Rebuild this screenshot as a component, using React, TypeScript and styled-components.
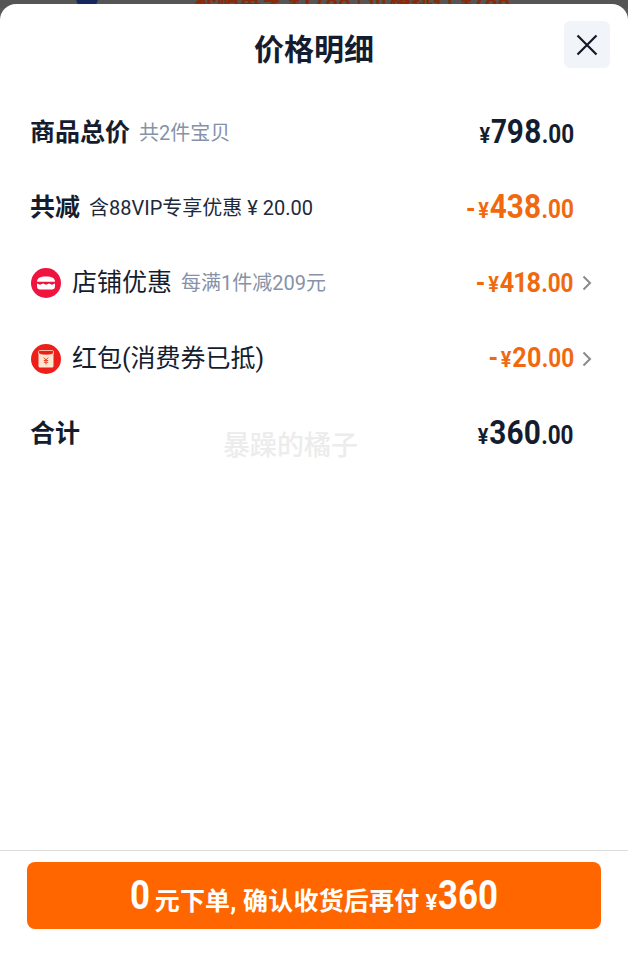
import React from "react";
import styled, { createGlobalStyle } from "styled-components";

const GlobalStyle = createGlobalStyle`
  html, body {
    margin: 0;
    padding: 0;
    background: #5a5a5a;
  }
  * {
    box-sizing: border-box;
  }
`;

const CJK = `Roboto, "Noto Sans CJK SC", sans-serif`;

const rows = [
  { key: "total", label: "商品总价", note: "共2件宝贝", strong: true, sign: "", amount: "798" },
  { key: "off", label: "共减", vip: "含88VIP专享优惠 ¥ 20.00", strong: true, sign: "-", amount: "438", orange: true },
  { key: "shop", label: "店铺优惠", note: "每满1件减209元", icon: "shop", sign: "-", amount: "418", orange: true, small: true, arrow: true },
  { key: "red", label: "红包(消费券已抵)", icon: "red", sign: "-", amount: "20", orange: true, small: true, arrow: true },
  { key: "sum", label: "合计", strong: true, sign: "", amount: "360" },
];

function ShopIcon() {
  return (
    <svg width="30" height="30" viewBox="0 0 30 30">
      <circle cx="15" cy="15" r="15" fill="#f0123f" />
      <path d="M6 13.800c0-3.600 3-5.300 9-5.300s9 1.700 9 5.300z" fill="#fff" />
      <path d="M6 15.500l3 1.200 3-1.200 3 1.200 3-1.200 3 1.200 3-1.200v2.800c0 2.200-1.200 3.200-3.200 3.200H9.200c-2 0-3.200-1-3.200-3.200z" fill="#fff" />
    </svg>
  );
}

function RedPacketIcon() {
  return (
    <svg width="30" height="30" viewBox="0 0 30 30">
      <circle cx="15" cy="15" r="15" fill="#ee1f1a" />
      <rect x="7.500" y="6.500" width="15" height="17" rx="1.500" fill="#fde8cf" />
      <path d="M7.500 8c0-1 .5-1.500 1.500-1.500h12c1 0 1.500.5 1.500 1.500v1.500c-2 1-4.500 1.500-7.500 1.500s-5.500-.5-7.500-1.500z" fill="#ee1f1a" stroke="#fde8cf" strokeWidth=".7" />
      <path d="M12.800 13.500l2.200 2.500 2.200-2.500M12.800 16.500h4.400M12.800 18.300h4.400M15 16v4.500" fill="none" stroke="#e8432a" strokeWidth="1" />
    </svg>
  );
}

export default function App() {
  return (
    <>
      <GlobalStyle />
      <Screen>
        <Backdrop>
          <BackdropLogo />
          <BackdropText>补贴再享 ¥1788 | 价格排行 ¥788</BackdropText>
        </Backdrop>
        <Sheet>
          <Header>
            <Title>价格明细</Title>
            <CloseButton aria-label="关闭">
              <svg width="24" height="24" viewBox="0 0 24 24">
                <path d="M2.500 2.500l19 19M21.500 2.500l-19 19" stroke="#111827" strokeWidth="2.200" fill="none" />
              </svg>
            </CloseButton>
          </Header>
          <List>
            {rows.map((row) => (
              <Row key={row.key}>
                <RowLeft>
                  {row.icon === "shop" && <IconSlot><ShopIcon /></IconSlot>}
                  {row.icon === "red" && <IconSlot><RedPacketIcon /></IconSlot>}
                  <Label $strong={row.strong}>{row.label}</Label>
                  {row.note && <Note>{row.note}</Note>}
                  {row.vip && <VipNote>{row.vip}</VipNote>}
                </RowLeft>
                <Price $orange={row.orange}>
                  {row.sign && <Sign>{row.sign}</Sign>}
                  <Yen>¥</Yen>
                  <Amount $small={row.small}>{row.amount}</Amount>
                  <Cents>.00</Cents>
                </Price>
                <ArrowSlot>
                  {row.arrow && (
                    <svg width="10" height="16" viewBox="0 0 10 16">
                      <path d="M1.500 1.500L8 8l-6.500 6.500" stroke="#8a8a8a" strokeWidth="2" fill="none" />
                    </svg>
                  )}
                </ArrowSlot>
              </Row>
            ))}
            <Watermark>暴躁的橘子</Watermark>
          </List>
          <Footer>
            <PayButton>
              <BigNum $chars={1}>0</BigNum>
              <PayText>元下单, 确认收货后再付</PayText>
              <PayYen>¥</PayYen>
              <BigNum $chars={3}>360</BigNum>
            </PayButton>
          </Footer>
        </Sheet>
      </Screen>
    </>
  );
}

const Screen = styled.div`
  height: 954px;
  display: flex;
  flex-direction: column;
  position: relative;
  overflow: hidden;
  font-family: ${CJK};
`;

const Backdrop = styled.div`
  position: absolute;
  top: -12px;
  left: 0;
  width: 100%;
  height: 20px;
  background: #555;
  display: flex;
  align-items: center;
`;

const BackdropLogo = styled.div`
  width: 22px;
  height: 22px;
  margin-left: 76px;
  background: #16265f;
  border-radius: 50%;
`;

const BackdropText = styled.div`
  margin-left: 97px;
  color: #8a2a08;
  font-size: 22px;
  font-weight: 700;
  white-space: nowrap;
`;

const Sheet = styled.div`
  position: relative;
  margin-top: 4px;
  flex: 1;
  display: flex;
  flex-direction: column;
  background: #fff;
  border-radius: 16px 16px 0 0;
`;

const Header = styled.div`
  position: relative;
  height: 91px;
  display: flex;
  justify-content: center;
  padding-top: 24px;
`;

const Title = styled.h1`
  margin: 0;
  font-size: 30px;
  line-height: 44px;
  font-weight: 700;
  color: #141d2f;
`;

const CloseButton = styled.button`
  position: absolute;
  top: 17px;
  right: 18px;
  width: 46px;
  height: 47px;
  border: 0;
  border-radius: 6px;
  background: #f1f5f9;
  display: flex;
  align-items: center;
  justify-content: center;
  padding: 0;
`;

const List = styled.div`
  position: relative;
  flex: 1;
  display: flex;
  flex-direction: column;
  padding: 0 31px 0 30px;
`;

const Row = styled.div`
  height: 75.300px;
  display: flex;
  align-items: center;
`;

const RowLeft = styled.div`
  flex: 1;
  display: flex;
  align-items: center;
  min-width: 0;
`;

const IconSlot = styled.div`
  width: 41px;
  height: 30px;
  flex: none;
  margin-left: 1px;
`;

const Label = styled.span<{ $strong?: boolean }>`
  font-size: 25px;
  line-height: 36px;
  font-weight: ${(p) => (p.$strong ? 700 : 400)};
  color: #141d2f;
`;

const Note = styled.span`
  margin: 0 0 3px 9px;
  font-size: 20px;
  color: #8592a8;
`;

const VipNote = styled.span`
  margin: 0 0 3px 9px;
  font-size: 20px;
  color: #1e293b;
`;

/* the price digits in the shot are a narrow DIN-like face, so squeeze Roboto from the right edge */
const Price = styled.div<{ $orange?: boolean }>`
  display: flex;
  align-items: baseline;
  margin-bottom: 2px;
  transform: scaleX(0.9);
  transform-origin: right center;
  color: ${(p) => (p.$orange ? "#f0690f" : "#141d2f")};
  font-weight: 700;
`;

const Sign = styled.span`
  font-size: 27px;
  margin-right: 3px;
`;

const Yen = styled.span`
  font-size: 22px;
  margin-right: 1px;
`;

const Amount = styled.span<{ $small?: boolean }>`
  font-size: ${(p) => (p.$small ? 28 : 33)}px;
  font-variant-numeric: proportional-nums;
`;

const Cents = styled.span`
  font-size: 25px;
`;

const ArrowSlot = styled.div`
  width: 18px;
  flex: none;
  display: flex;
  justify-content: flex-end;
  margin-right: 5px;
`;

const Watermark = styled.div`
  position: absolute;
  top: 329px;
  left: 223px;
  font-size: 27px;
  font-weight: 500;
  color: #ececec;
  white-space: nowrap;
`;

const Footer = styled.div`
  height: 104px;
  border-top: 1px solid #dedede;
  padding: 11px 27px 0;
`;

const PayButton = styled.button`
  width: 100%;
  height: 67px;
  border: 0;
  border-radius: 8px;
  background: #ff6600;
  color: #fff;
  display: flex;
  align-items: baseline;
  justify-content: center;
  padding: 12px 0 0;
  font-family: ${CJK};
  font-weight: 700;
`;

const BigNum = styled.span<{ $chars: number }>`
  display: inline-block;
  width: ${(p) => p.$chars * 20}px;
  font-size: 40px;
  line-height: 44px;
  transform: scaleX(0.87);
  transform-origin: left center;
`;

const PayText = styled.span`
  font-size: 25px;
  letter-spacing: 0.2px;
  margin-left: 5px;
  transform: translateY(1px);
`;

const PayYen = styled.span`
  font-size: 22px;
  margin: 0 1px 0 6px;
  transform: translateY(1px);
`;
